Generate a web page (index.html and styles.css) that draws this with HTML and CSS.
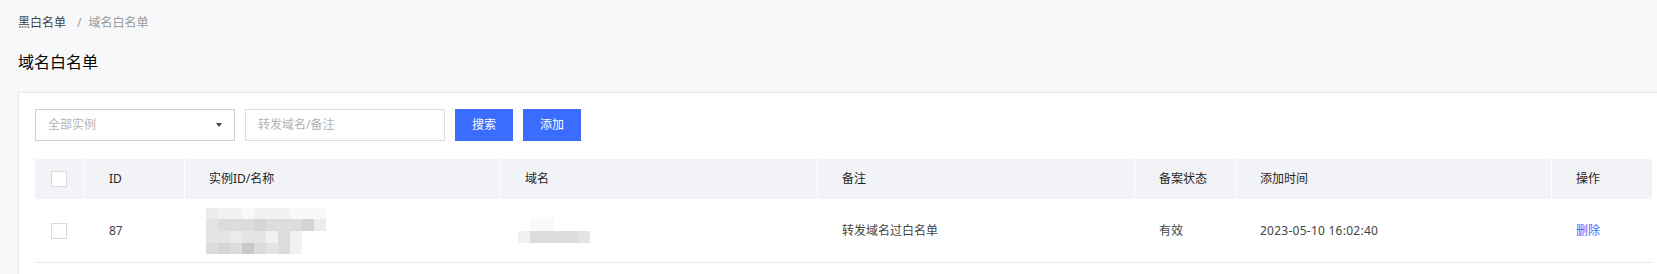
FILE: index.html
```html
<!DOCTYPE html>
<html lang="zh-CN">
<head>
<meta charset="utf-8">
<title>域名白名单</title>
<link rel="stylesheet" href="styles.css">
</head>
<body>
<div class="breadcrumb">
  <span class="crumb-link">黑白名单</span>
  <span class="crumb-sep">/</span>
  <span class="crumb-current">域名白名单</span>
</div>
<h1 class="page-title">域名白名单</h1>
<div class="card">
  <div class="toolbar">
    <div class="select">
      <span class="placeholder">全部实例</span>
      <span class="caret"></span>
    </div>
    <div class="input"><span class="placeholder">转发域名/备注</span></div>
    <button class="btn">搜索</button>
    <button class="btn">添加</button>
  </div>
  <div class="table">
    <div class="row head">
      <div class="cell cell-check"><span class="checkbox"></span></div>
      <div class="cell">ID</div>
      <div class="cell">实例ID/名称</div>
      <div class="cell">域名</div>
      <div class="cell">备注</div>
      <div class="cell">备案状态</div>
      <div class="cell">添加时间</div>
      <div class="cell">操作</div>
    </div>
    <div class="row body">
      <div class="cell cell-check"><span class="checkbox"></span></div>
      <div class="cell">87</div>
      <div class="cell cell-blur-inst">
        <div class="mosaic mosaic-inst">
          <i class="s2"></i><i class="s1"></i><i class="s1"></i><i class="s0"></i><i class="s1"></i><i class="s1"></i><i class="s1"></i><i class="s0"></i><i class="s0"></i><i class="s0"></i>
          <i class="s3"></i><i class="s4"></i><i class="s4"></i><i class="s4"></i><i class="s5"></i><i class="s4"></i><i class="s4"></i><i class="s4"></i><i class="s5"></i><i class="s2"></i>
          <i class="s3"></i><i class="s3"></i><i class="s2"></i><i class="s3"></i><i class="s3"></i><i class="s1"></i><i class="s4"></i><i class="s1"></i><i></i><i></i>
          <i class="s4"></i><i class="s5"></i><i class="s4"></i><i class="s6"></i><i class="s4"></i><i class="s3"></i><i class="s4"></i><i class="s1"></i><i></i><i></i>
        </div>
      </div>
      <div class="cell cell-blur-dom">
        <div class="mosaic mosaic-dom">
          <i></i><i class="s0"></i><i class="s0"></i><i></i><i></i><i></i>
          <i class="s1"></i><i class="s4"></i><i class="s4"></i><i class="s4"></i><i class="s4"></i><i class="s3"></i>
        </div>
      </div>
      <div class="cell">转发域名过白名单</div>
      <div class="cell">有效</div>
      <div class="cell cell-time">2023-05-10 16:02:40</div>
      <div class="cell"><a class="link">删除</a></div>
    </div>
  </div>
</div>
</body>
</html>
```

FILE: styles.css
```css
* { box-sizing: border-box; }

html, body {
  margin: 0;
  overflow: hidden;
}

body {
  background: #f7f8fa;
  padding: 14px 0 0 18px;
  font-family: "Noto Sans", "Noto Sans CJK SC", sans-serif;
  font-size: 12px;
  color: #333;
}

.breadcrumb {
  display: flex;
  align-items: center;
  height: 18px;
  line-height: 18px;
  font-size: 12px;
}

.crumb-link { color: #444; }
.crumb-sep { color: #999; margin: 0 7px 0 11px; }
.crumb-current { color: #999; }

.page-title {
  margin: 18px 0 0;
  height: 24px;
  line-height: 24px;
  font-size: 16px;
  font-weight: normal;
  color: #000;
}

.card {
  margin-top: 18px;
  width: 1652px;
  background: #fff;
  border: 1px solid #e6e9ee;
  padding: 16px;
  height: 300px;
}

.toolbar {
  display: flex;
  gap: 10px;
  height: 32px;
}

.select, .input {
  width: 200px;
  height: 32px;
  background: #fff;
  padding: 0 12px;
  display: flex;
  align-items: center;
  justify-content: space-between;
}

.select { border: 1px solid #cfcfcf; }
.input { border: 1px solid #dddddd; }

.placeholder {
  color: #b3b3b3;
  line-height: 18px;
}

.caret {
  width: 0;
  height: 0;
  border-left: 3.5px solid transparent;
  border-right: 3.5px solid transparent;
  border-top: 4px solid #444;
}

.btn {
  width: 58px;
  height: 32px;
  border: none;
  padding: 0;
  background: #3a6cfd;
  color: #fff;
  font-family: inherit;
  font-size: 12px;
  line-height: 18px;
}

.table {
  margin-top: 18px;
  width: 1618px;
}

.row {
  display: grid;
  grid-template-columns: 50px 100px 316px 317px 317px 101px 316px 101px;
}

.head { background: #f2f3f6; height: 40px; }
.head .cell { color: #1f1f1f; }

.body { height: 64px; }
.body .cell { border-bottom: 1px solid #e8e8e8; color: #444; }

.cell {
  display: flex;
  align-items: center;
  padding-left: 24px;
  border-right: 1px solid #fff;
  line-height: 18px;
  white-space: nowrap;
}

.cell-check { padding-left: 16px; }
.cell-time { letter-spacing: 0.25px; }

.checkbox {
  display: block;
  width: 16px;
  height: 16px;
  background: #fff;
  border: 1px solid #dadada;
}

.cell-blur-inst { padding-left: 21px; }
.cell-blur-dom { padding-left: 17px; }

.mosaic {
  display: grid;
  grid-auto-rows: 12px;
}

.mosaic-inst {
  grid-template-columns: repeat(10, 12px);
  grid-template-rows: 11px 12px 12px 11px;
}

.mosaic-dom {
  grid-template-columns: repeat(6, 12px);
}

.mosaic i { display: block; }
.s0 { background: #f9f9f9; }
.s1 { background: #f1f1f1; }
.s2 { background: #ebebeb; }
.s3 { background: #e4e4e4; }
.s4 { background: #dcdcdc; }
.s5 { background: #d5d5d5; }
.s6 { background: #c9c9c9; }

.link {
  color: #3a6cfd;
  cursor: pointer;
}
```
